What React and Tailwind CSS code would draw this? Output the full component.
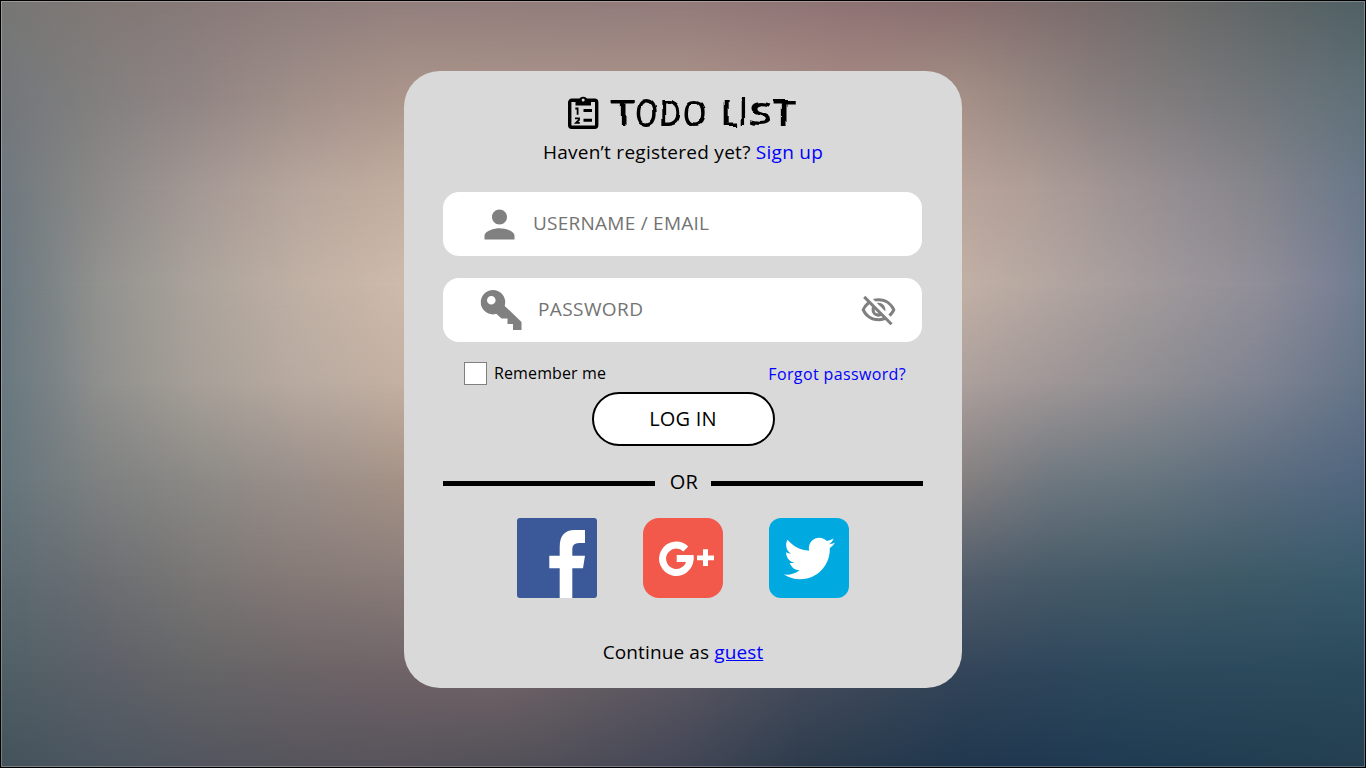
import { MdPerson, MdOutlineVisibilityOff } from "react-icons/md";
import { FaTwitter } from "react-icons/fa";

const MESH = [
  [0, [[0, "#767774"], [100, "#807875"], [200, "#877a79"], [270, "#8c7c7b"], [400, "#927f7d"], [683, "#927b7a"], [850, "#8d7273"], [962, "#876e6e"], [1100, "#776b6b"], [1160, "#6e6b6a"], [1260, "#5f6566"], [1366, "#4f6064"]]],
  [95, [[0, "#73777b"], [100, "#827f7e"], [200, "#918584"], [300, "#a08f89"], [400, "#ab958b"], [683, "#ac948b"], [850, "#a78a84"], [962, "#a48f86"], [1100, "#897f7e"], [1230, "#75777a"], [1366, "#5f7078"]]],
  [190, [[0, "#6f7880"], [50, "#7d8182"], [100, "#8b8988"], [200, "#a59995"], [300, "#b7a69c"], [400, "#c2aea0"], [962, "#b8a49a"], [1030, "#b09e98"], [1150, "#999093"], [1260, "#85858c"], [1366, "#69788a"]]],
  [285, [[0, "#6a7880"], [50, "#7d8486"], [100, "#92928f"], [200, "#aca49c"], [300, "#c0b0a4"], [400, "#cdbaab"], [962, "#c2b0a5"], [1050, "#b3a6a1"], [1150, "#a29a9b"], [1260, "#908e98"], [1330, "#7d8295"], [1366, "#6d7c90"]]],
  [384, [[0, "#68787f"], [50, "#7a8286"], [100, "#8f908d"], [200, "#a7a098"], [300, "#b8aaa0"], [400, "#c3b0a2"], [962, "#aca09c"], [1050, "#9f9696"], [1150, "#8f8e92"], [1260, "#7e8391"], [1366, "#647488"]]],
  [480, [[0, "#65757c"], [100, "#7e8181"], [200, "#8c8a86"], [300, "#9a8f8a"], [400, "#a59286"], [962, "#858080"], [1050, "#6f7880"], [1150, "#67757e"], [1260, "#5b6c7e"], [1366, "#50667f"]]],
  [576, [[0, "#5c6b72"], [100, "#6c6f73"], [200, "#7a7775"], [300, "#867a77"], [400, "#8a7d79"], [962, "#525d6b"], [1050, "#485b68"], [1150, "#435b68"], [1260, "#3d5a68"], [1366, "#385a6b"]]],
  [672, [[0, "#505f66"], [100, "#5c6068"], [200, "#656567"], [300, "#6b6467"], [400, "#6f6367"], [500, "#716467"], [683, "#5b5761"], [800, "#464c5c"], [962, "#334559"], [1050, "#2e465b"], [1150, "#2c495c"], [1366, "#2a4a5c"]]],
  [768, [[0, "#43525b"], [100, "#4c5660"], [200, "#52555e"], [300, "#56545c"], [400, "#57535b"], [550, "#504f58"], [683, "#424656"], [800, "#2d3c4c"], [962, "#20374e"], [1130, "#1f3b52"], [1366, "#243f50"]]],
];

function Backdrop() {
  return (
    <div className="absolute inset-0" aria-hidden="true">
      {MESH.map(([y, stops], i) => (
        <div
          key={y}
          className="absolute inset-0"
          style={{
            backgroundImage: `linear-gradient(to right, ${stops.map(([x, c]) => `${c} ${x}px`).join(", ")})`,
            maskImage: i ? `linear-gradient(to bottom, transparent ${MESH[i - 1][0]}px, black ${y}px)` : "none",
          }}
        />
      ))}
      <div className="absolute inset-0 border border-black" />
      <div className="absolute inset-px border border-white/25" />
    </div>
  );
}

const TITLE = [
  ["T", "w-[24px]", "scale-x-[1.1]"],
  ["O", "w-[23px]", "scale-x-[0.79]"],
  ["D", "w-[25px]", "scale-x-[0.91]"],
  ["O", "w-[24px]", "scale-x-[0.8]"],
  ["\u00a0", "w-[14px]", ""],
  ["L", "w-[18px]", "scale-x-[0.95]"],
  ["I", "w-[9px]", "-translate-y-0.5 scale-x-[0.8]"],
  ["S", "w-[25px]", "scale-x-[1.2] scale-y-[0.92]"],
  ["T", "w-[23px]", "scale-x-[1.1]"],
];

function Title() {
  return (
    <h1 className="flex filter-[url(#brush)] text-[36px] leading-[38px] font-semibold">
      {TITLE.map(([letter, width, shape], i) => (
        <span key={i} className={`flex justify-center ${width}`}>
          <span className={`inline-block ${shape}`}>{letter}</span>
        </span>
      ))}
      <svg className="absolute size-0">
        <filter id="brush">
          <feTurbulence type="fractalNoise" baseFrequency="0.045" numOctaves="2" seed="4" />
          <feDisplacementMap in="SourceGraphic" scale="6" xChannelSelector="R" yChannelSelector="G" />
        </filter>
      </svg>
    </h1>
  );
}

function ClipboardIcon() {
  return (
    <svg className="h-[34px] w-[31px]" viewBox="0 0 31 34" fill="none">
      <rect x="1.700" y="4.300" width="27" height="27" rx="2" stroke="#000" strokeWidth="3.400" />
      <path d="M7.500 4h3.600a4.200 4.200 0 0 1 8.200 0h3.700V9.500h-15.500z" fill="#000" />
      <circle cx="15.200" cy="4" r="1.500" fill="#d9d9d9" />
      <path d="M15.500 14.500h8.500M15.500 24.300h8.500" stroke="#000" strokeWidth="3" />
      <path d="M7.300 12.500h2.300v6.300M7 22.300h4v1.500l-3 3h3.800" stroke="#000" strokeWidth="1.800" />
    </svg>
  );
}

function KeyIcon() {
  return (
    <svg className="size-[42px]" viewBox="0 0 42 42" fill="#808080">
      <path fillRule="evenodd" d="M13 1a12.200 12.200 0 1 0 0 24.400A12.200 12.200 0 1 0 13 1zM11.300 7a4.300 4.300 0 1 1 0 8.600a4.300 4.300 0 1 1 0-8.600z" />
      <path d="M24.500 16.700L41.500 33V41H33V35H27.500V29.500H21.500L16 24.500z" />
    </svg>
  );
}

function FacebookIcon() {
  return (
    <svg className="size-[80px]" viewBox="0 0 80 80">
      <rect width="80" height="80" rx="3" fill="#3b5998" />
      <path d="M42.700 80V50.300H32.300V37.700H42.700V29q0-17 15-17H68v13h-6q-6.700 0-6.700 6v6.700H68L66 50.300H55.300V80z" fill="#fff" />
    </svg>
  );
}

function GooglePlusIcon() {
  return (
    <svg className="size-[80px]" viewBox="0 0 80 80">
      <rect width="80" height="80" rx="16" fill="#f2594b" />
      <path d="M42.800 30.900A13.700 13.700 0 1 0 47 40.600H33.700" fill="none" stroke="#fff" strokeWidth="7" />
      <path d="M46 37.100h4.300q.6 3.500-.3 7h-4zM60 31.300h5v6.300h6v4.700h-6V48h-5v-5.700h-6v-4.700h6z" fill="#fff" />
    </svg>
  );
}

export default function App() {
  return (
    <main className="relative flex h-[768px] w-[1366px] justify-center overflow-hidden pt-[71px] font-['Open_Sans',sans-serif] text-black">
      <Backdrop />
      <section className="relative flex h-[617px] w-[558px] flex-col items-center rounded-[36px] bg-[#d9d9d9] pt-[23px]">
        <header className="mr-[2px] flex h-[38px] items-center gap-[12px]">
          <ClipboardIcon />
          <Title />
        </header>
        <p className="mt-[6px] text-[19px] leading-[28px] tracking-[0.27px] whitespace-nowrap">
          Haven’t registered yet? <a className="text-[#0000ff]">Sign up</a>
        </p>
        <div className="mt-[26px] mr-px flex h-[64px] w-[479px] items-center rounded-2xl bg-white pl-[34px] text-[#737373]">
          <MdPerson className="size-[45px] text-[#808080]" />
          <span className="mb-[2px] ml-[11px] text-[19px] tracking-[0.25px]">USERNAME / EMAIL</span>
        </div>
        <div className="mt-[22px] mr-px flex h-[64px] w-[479px] items-center rounded-2xl bg-white pr-[25px] pl-[37px] text-[#737373]">
          <KeyIcon />
          <span className="mb-[2px] ml-[16px] flex-1 text-[19px] tracking-[0.4px]">PASSWORD</span>
          <MdOutlineVisibilityOff className="size-[37px] text-[#808080]" />
        </div>
        <div className="mt-[20px] ml-[4px] flex h-[23px] w-[442px] items-center text-[16px]">
          <span className="size-[23px] border border-[#808080] bg-white" />
          <span className="mb-[2px] ml-[7px] flex-1 tracking-[0.12px]">Remember me</span>
          <a className="tracking-[0.37px] text-[#0000ff]">Forgot password?</a>
        </div>
        <button className="mt-[7px] flex h-[54px] w-[183px] items-center justify-center rounded-[27px] border-2 border-black bg-white text-[20px] tracking-[0.2px]">
          LOG IN
        </button>
        <div className="mt-[21px] flex h-[30px] w-[480px] items-center justify-between text-[20px]">
          <span className="mt-[3px] h-[5px] w-[212px] bg-black" />
          <span className="ml-[2px] tracking-[0.3px]">OR</span>
          <span className="mt-[3px] h-[5px] w-[212px] bg-black" />
        </div>
        <div className="mt-[21px] flex gap-[46px]">
          <FacebookIcon />
          <GooglePlusIcon />
          <span className="flex size-[80px] items-center justify-center rounded-[12px] bg-[#00aae1]">
            <FaTwitter className="size-[51px] text-white" />
          </span>
        </div>
        <p className="mt-[40px] text-[19px] leading-[28px] tracking-[0.12px]">Continue as <a className="text-[#0000ff] underline">guest</a></p>
      </section>
    </main>
  );
}
